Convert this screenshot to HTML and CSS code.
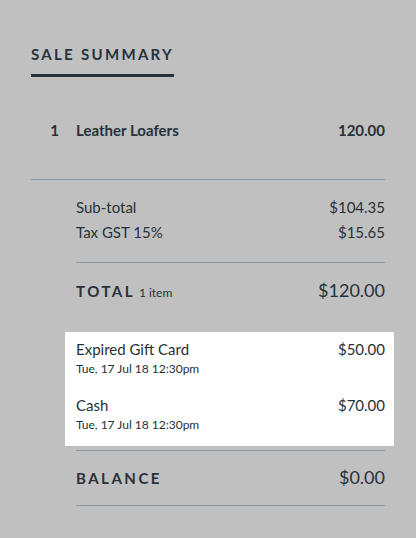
FILE: index.html
```html
<!DOCTYPE html>
<html>
<head>
<meta charset="utf-8">
<link rel="stylesheet" href="styles.css">
</head>
<body>
<div class="summary">
  <div class="title-wrap"><h1 class="title">SALE SUMMARY</h1></div>
  <div class="item">
    <span class="qty">1</span>
    <span class="name">Leather Loafers</span>
    <span class="price">120.00</span>
  </div>
  <div class="totals">
    <div class="sub">
      <div class="row"><span>Sub-total</span><span>$104.35</span></div>
      <div class="row"><span>Tax GST 15%</span><span>$15.65</span></div>
    </div>
    <div class="row total">
      <span><span class="label">TOTAL</span> <span class="count">1 item</span></span>
      <span class="big">$120.00</span>
    </div>
    <div class="payments">
      <div class="pay">
        <div class="row"><span>Expired Gift Card</span><span>$50.00</span></div>
        <div class="date">Tue, 17 Jul 18 12:30pm</div>
      </div>
      <div class="pay">
        <div class="row"><span>Cash</span><span>$70.00</span></div>
        <div class="date">Tue, 17 Jul 18 12:30pm</div>
      </div>
    </div>
    <div class="row balance">
      <span class="label">BALANCE</span>
      <span class="big">$0.00</span>
    </div>
  </div>
</div>
</body>
</html>
```
FILE: styles.css
```css
html, body {
  margin: 0;
  padding: 0;
  background: #c0c0c0;
}
body {
  font-family: Lato, "Open Sans", sans-serif;
  color: #27313a;
  width: 416px;
  height: 538px;
  overflow: hidden;
}
.summary {
  padding: 44px 31px 0 31px;
}
.title-wrap {
  display: flex;
}
.title {
  margin: 0;
  font-size: 15px;
  font-weight: 700;
  letter-spacing: 2.3px;
  line-height: 20px;
  padding-bottom: 10px;
  border-bottom: 3px solid #27313a;
  white-space: nowrap;
}
.item {
  display: flex;
  align-items: baseline;
  font-size: 15px;
  font-weight: 700;
  padding: 43px 0 39px 0;
  border-bottom: 1px solid #8d999e;
  line-height: 20px;
}
.qty {
  width: 28px;
  text-align: right;
  margin-right: 17px;
}
.name {
  flex: 1;
}
.totals {
  margin-left: 45px;
}
.row {
  display: flex;
  justify-content: space-between;
  align-items: baseline;
  font-size: 15px;
  line-height: 20px;
}
.sub {
  padding: 17px 0 20px;
  border-bottom: 1px solid #8d999e;
}
.sub .row + .row {
  margin-top: 5px;
}
.total {
  padding: 17px 0 29px;
}
.label {
  font-weight: 700;
  letter-spacing: 2.5px;
}
.count {
  font-size: 12px;
  letter-spacing: 0;
}
.big {
  font-size: 18px;
}
.payments {
  background: #fff;
  margin: 0 -9px 0 -11px;
  padding: 7px 9px 13px 11px;
}
.pay + .pay {
  margin-top: 18px;
}
.date {
  font-size: 12px;
  line-height: 16px;
  margin-top: 2px;
}
.balance {
  margin-top: 4px;
  border-top: 1px solid #8d999e;
  border-bottom: 1px solid #8d999e;
  padding: 16px 0 17px;
}
```
